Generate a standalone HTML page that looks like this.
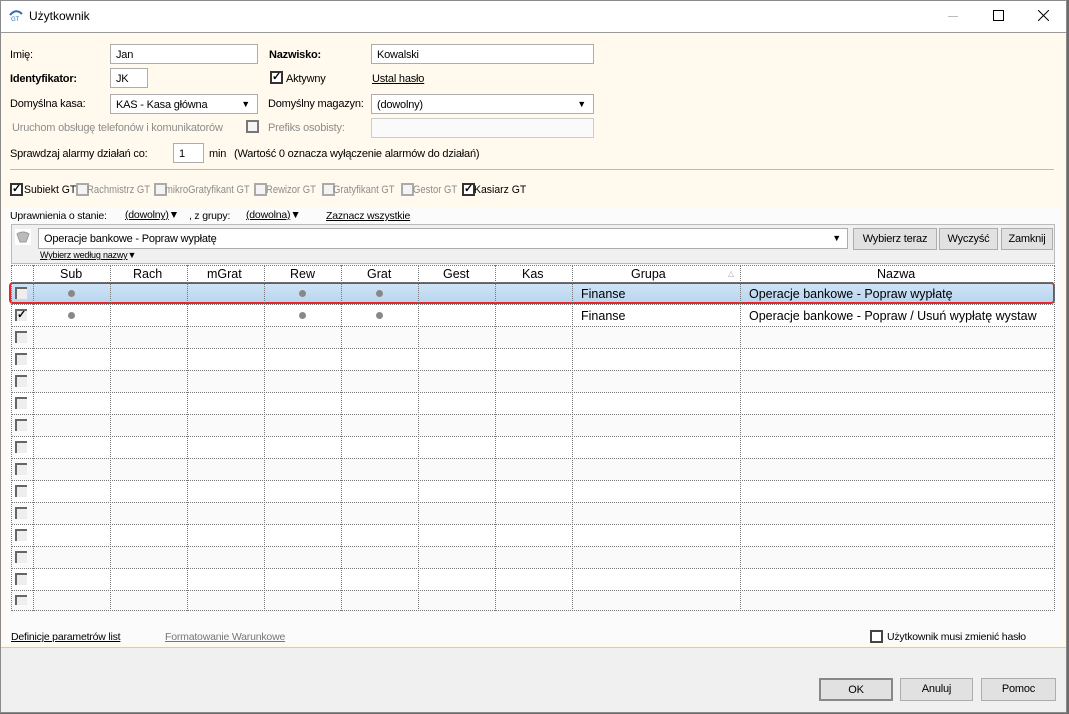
<!DOCTYPE html><html><head><meta charset="utf-8"><style>
*{box-sizing:border-box;margin:0;padding:0}
body{width:1069px;height:714px;overflow:hidden;background:#6b6b6b;font-family:"Liberation Sans",sans-serif;font-size:11px;letter-spacing:-0.2px;color:#000;position:relative}
.a{position:absolute;white-space:nowrap}
.s{transform:scaleX(.86);transform-origin:0 0;letter-spacing:0}
.win{position:absolute;left:0;top:0;width:1067px;height:713px;background:#f0f0f0}
.frame{position:absolute;left:0;top:0;width:1067px;height:713px;border:1px solid #8a8a8a;pointer-events:none}
.title{position:absolute;left:0;top:0;width:1067px;height:33px;background:#fff;border-bottom:1px solid #9a9a9a}
.cream{position:absolute;left:0;top:33px;width:1066px;height:615px;background:#fff9ee;border-bottom:1px solid #ccc}
.inp{position:absolute;background:#fff;border:1px solid #adadad;height:20px;padding:4px 5px 2px}
.cb{position:absolute;width:13px;height:13px;border:2px solid #333;background:#fff;font-size:11px;line-height:9px;text-align:center;font-weight:bold}
.cbg{position:absolute;width:13px;height:13px;border:2px solid #aaa;background:#f4f4f4}
.gray{color:#8d8d8d}
u{text-decoration:underline}
.btn{position:absolute;background:#e1e1e1;border:1px solid #adadad;text-align:center;line-height:20px}
.g{position:absolute;left:11px;top:265px;width:1044px;height:346px;background:#fff;font-size:12.5px;letter-spacing:0}
.vl{position:absolute;top:0;height:346px;border-left:1px dotted #777}
.hl{position:absolute;left:0;width:1044px;border-top:1px dotted #777}
.dot{position:absolute;width:7px;height:7px;border-radius:50%;background:#888}
.rc{position:absolute;left:4px;width:12px;height:12px;border-left:2px solid #666;border-top:2px solid #666;background:#eee}
</style></head><body>
<div class="win">
<div class="title">
<svg class="a" style="left:9px;top:9px" width="14" height="12" viewBox="0 0 14 12"><path d="M1 6 Q7 -1 13 5" stroke="#2a6fb0" stroke-width="2" fill="none"/><text x="2" y="12" font-size="6" fill="#2a6fb0" font-family="Liberation Sans">GT</text></svg>
<div class="a" style="left:29px;top:9px;font-size:12px;letter-spacing:0">Użytkownik</div>
<div class="a" style="left:948px;top:16px;width:10px;border-top:1px solid #bbb"></div>
<div class="a" style="left:993px;top:10px;width:11px;height:11px;border:1px solid #000"></div>
<svg class="a" style="left:1038px;top:10px" width="11" height="11"><path d="M0 0L11 11M11 0L0 11" stroke="#000" stroke-width="1"/></svg>
</div>
<div class="cream">
<div class="a" style="left:10px;top:16px">Imię:</div>
<div class="inp" style="left:110px;top:11px;width:148px">Jan</div>
<div class="a" style="left:269px;top:16px;font-weight:bold">Nazwisko:</div>
<div class="inp" style="left:371px;top:11px;width:223px">Kowalski</div>
<div class="a" style="left:10px;top:40px;font-weight:bold">Identyfikator:</div>
<div class="inp" style="left:110px;top:35px;width:38px">JK</div>
<div class="cb" style="left:270px;top:38px">✓</div>
<div class="a" style="left:286px;top:40px">Aktywny</div>
<div class="a" style="left:372px;top:40px"><u>Ustal hasło</u></div>
<div class="a" style="left:10px;top:65px">Domyślna kasa:</div>
<div class="inp" style="left:110px;top:61px;width:148px">KAS - Kasa główna<span class="a" style="right:7px;top:4px;font-size:9px">▼</span></div>
<div class="a" style="left:268px;top:65px">Domyślny magazyn:</div>
<div class="inp" style="left:371px;top:61px;width:223px">(dowolny)<span class="a" style="right:7px;top:4px;font-size:9px">▼</span></div>
<div class="a gray" style="left:12px;top:89px">Uruchom obsługę telefonów i komunikatorów</div>
<div class="cbg" style="left:246px;top:87px;border-color:#777"></div>
<div class="a gray" style="left:268px;top:89px">Prefiks osobisty:</div>
<div class="inp" style="left:371px;top:85px;width:223px;border-color:#ccc;background:#fafafa"></div>
<div class="a" style="left:10px;top:115px">Sprawdzaj alarmy działań co:</div>
<div class="inp" style="left:173px;top:110px;width:31px">1</div>
<div class="a" style="left:209px;top:115px">min</div>
<div class="a" style="left:234px;top:115px">(Wartość 0 oznacza wyłączenie alarmów do działań)</div>
<div class="a" style="left:10px;top:136px;width:1044px;border-top:1px solid #bbb"></div>
<div class="cb" style="left:10px;top:150px">✓</div><div class="a s" style="left:24px;top:151px;transform:scaleX(.95)">Subiekt GT</div>
<div class="cbg" style="left:76px;top:150px"></div><div class="a gray s" style="left:87px;top:151px">Rachmistrz GT</div>
<div class="cbg" style="left:154px;top:150px"></div><div class="a gray s" style="left:165px;top:151px">mikroGratyfikant GT</div>
<div class="cbg" style="left:254px;top:150px"></div><div class="a gray s" style="left:266px;top:151px">Rewizor GT</div>
<div class="cbg" style="left:322px;top:150px"></div><div class="a gray s" style="left:333px;top:151px">Gratyfikant GT</div>
<div class="cbg" style="left:401px;top:150px"></div><div class="a gray s" style="left:413px;top:151px">Gestor GT</div>
<div class="cb" style="left:462px;top:150px">✓</div><div class="a s" style="left:474px;top:151px;transform:scaleX(.95)">Kasiarz GT</div>
<div class="a" style="left:4px;top:175px;width:1058px;height:435px;background:#fbfbfb"></div>
<div class="a" style="left:10px;top:177px;font-size:10.5px">Uprawnienia o stanie:</div>
<div class="a" style="left:125px;top:176px;font-size:10.5px"><u>(dowolny)</u>▼</div>
<div class="a" style="left:189px;top:177px;font-size:10.5px">, z grupy:</div>
<div class="a" style="left:246px;top:176px;font-size:10.5px"><u>(dowolna)</u>▼</div>
<div class="a" style="left:326px;top:177px;font-size:10.5px"><u>Zaznacz wszystkie</u></div>
<div class="a" style="left:11px;top:191px;width:1044px;height:40px;background:#f0f0f0;border:1px solid #bbb"></div>
<div class="a" style="left:15px;top:196px;width:16px;height:16px;background:#fff"><svg width="16" height="16"><path d="M2 5 Q8 1 14 5 L11 13 L5 13Z" fill="#bbb" stroke="#999"/></svg></div>
<div class="inp" style="left:38px;top:195px;width:810px;height:21px">Operacje bankowe - Popraw wypłatę<span class="a" style="right:6px;top:4px;font-size:9px">▼</span></div>
<div class="btn" style="left:853px;top:195px;width:84px">Wybierz teraz</div>
<div class="btn" style="left:939px;top:195px;width:59px">Wyczyść</div>
<div class="btn" style="left:1001px;top:195px;width:52px">Zamknij</div>
<div class="a" style="left:40px;top:217px;font-size:9px"><u>Wybierz według nazwy</u>▼</div>
</div>
<div class="g">
<div class="a" style="left:0;top:17px;width:1044px;height:22px;background:#fafafa"></div>
<div class="a" style="left:0;top:61px;width:1044px;height:22px;background:#fafafa"></div>
<div class="a" style="left:0;top:105px;width:1044px;height:22px;background:#fafafa"></div>
<div class="a" style="left:0;top:149px;width:1044px;height:22px;background:#fafafa"></div>
<div class="a" style="left:0;top:193px;width:1044px;height:22px;background:#fafafa"></div>
<div class="a" style="left:0;top:237px;width:1044px;height:22px;background:#fafafa"></div>
<div class="a" style="left:0;top:281px;width:1044px;height:22px;background:#fafafa"></div>
<div class="a" style="left:0;top:325px;width:1044px;height:22px;background:#fafafa"></div>
<div class="a" style="left:-2px;top:17px;width:1046px;height:22px;background:linear-gradient(#cfe3f5,#b9d6f0);border:2px solid #e8262a;border-radius:4px"></div>
<div class="vl" style="left:0"></div><div class="vl" style="left:22px"></div><div class="vl" style="left:99px"></div><div class="vl" style="left:176px"></div><div class="vl" style="left:253px"></div><div class="vl" style="left:330px"></div><div class="vl" style="left:407px"></div><div class="vl" style="left:484px"></div><div class="vl" style="left:561px"></div><div class="vl" style="left:729px"></div><div class="vl" style="left:1043px"></div>
<div class="hl" style="top:0"></div><div class="hl" style="top:17px"></div><div class="hl" style="top:39px"></div><div class="hl" style="top:61px"></div><div class="hl" style="top:83px"></div><div class="hl" style="top:105px"></div><div class="hl" style="top:127px"></div><div class="hl" style="top:149px"></div><div class="hl" style="top:171px"></div><div class="hl" style="top:193px"></div><div class="hl" style="top:215px"></div><div class="hl" style="top:237px"></div><div class="hl" style="top:259px"></div><div class="hl" style="top:281px"></div><div class="hl" style="top:303px"></div><div class="hl" style="top:325px"></div><div class="hl" style="top:345px"></div>
<div class="a" style="left:49px;top:2px">Sub</div><div class="a" style="left:122px;top:2px">Rach</div><div class="a" style="left:196px;top:2px">mGrat</div><div class="a" style="left:279px;top:2px">Rew</div><div class="a" style="left:356px;top:2px">Grat</div><div class="a" style="left:432px;top:2px">Gest</div><div class="a" style="left:511px;top:2px">Kas</div><div class="a" style="left:620px;top:2px">Grupa</div><div class="a" style="left:717px;top:4px;font-size:8px;color:#aaa">△</div><div class="a" style="left:866px;top:2px">Nazwa</div>
<div class="a" style="left:4px;top:22px;width:12px;height:12px;border-left:2px solid #666;border-top:2px solid #666;background:#eee"></div>
<div class="dot" style="left:57px;top:25px"></div><div class="dot" style="left:288px;top:25px"></div><div class="dot" style="left:365px;top:25px"></div>
<div class="a" style="left:570px;top:22px">Finanse</div><div class="a" style="left:738px;top:22px">Operacje bankowe - Popraw wypłatę</div>
<div class="a" style="left:4px;top:44px;width:12px;height:12px;border-left:2px solid #666;border-top:2px solid #666;background:#eee;font-size:11px;line-height:9px;font-weight:bold">✓</div>
<div class="dot" style="left:57px;top:47px"></div><div class="dot" style="left:288px;top:47px"></div><div class="dot" style="left:365px;top:47px"></div>
<div class="a" style="left:570px;top:44px">Finanse</div><div class="a" style="left:738px;top:44px">Operacje bankowe - Popraw / Usuń wypłatę wystaw</div>
<div class="rc" style="top:66px"></div><div class="rc" style="top:88px"></div><div class="rc" style="top:110px"></div><div class="rc" style="top:132px"></div><div class="rc" style="top:154px"></div><div class="rc" style="top:176px"></div><div class="rc" style="top:198px"></div><div class="rc" style="top:220px"></div><div class="rc" style="top:242px"></div><div class="rc" style="top:264px"></div><div class="rc" style="top:286px"></div><div class="rc" style="top:308px"></div><div class="rc" style="top:330px;height:10px"></div>
</div>
<div class="a" style="left:11px;top:631px;font-size:10.5px"><u>Definicje parametrów list</u></div>
<div class="a" style="left:165px;top:631px;font-size:10.5px;color:#777"><u>Formatowanie Warunkowe</u></div>
<div class="cb" style="left:870px;top:630px;border-color:#444"></div>
<div class="a" style="left:887px;top:631px;font-size:10.5px">Użytkownik musi zmienić hasło</div>
<div class="btn" style="left:819px;top:678px;width:74px;height:23px;border:2px solid #888">OK</div>
<div class="btn" style="left:900px;top:678px;width:73px;height:23px">Anuluj</div>
<div class="btn" style="left:981px;top:678px;width:75px;height:23px">Pomoc</div>
<div class="frame"></div>
</div>
</body></html>
